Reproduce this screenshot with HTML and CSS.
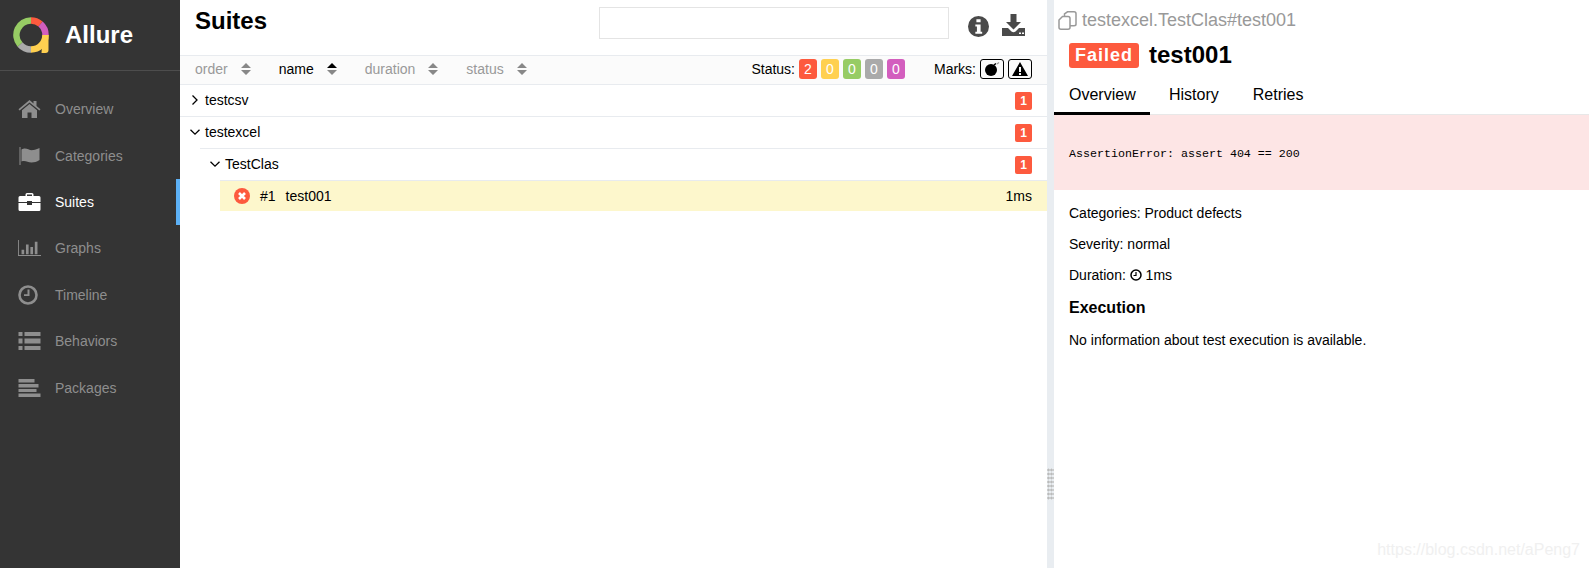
FILE: index.html
```html
<!DOCTYPE html>
<html lang="en">
<head>
<meta charset="utf-8">
<title>Allure</title>
<link rel="stylesheet" href="styles.css">
</head>
<body>
<div class="app">
  <aside class="side">
    <div class="brand">
      <svg class="logo" viewBox="0 0 36 36" width="36" height="36">
        <g fill="none" stroke-width="6.500">
          <path d="M18 3.500A14.500 14.500 0 0 1 27.500 7" stroke="#fd5a3e"/>
          <path d="M27.500 7A14.500 14.500 0 0 1 32.500 18" stroke="#d35ebe"/>
          <path d="M32.500 18A14.500 14.500 0 0 1 18 32.500" stroke="#ffd050"/>
          <path d="M18 32.500A14.500 14.500 0 0 1 7 27.500" stroke="#aaa"/>
          <path d="M7 27.500A14.500 14.500 0 0 1 18 3.500" stroke="#97cc64"/>
        </g>
        <path d="M29.500 18h6v15q0 3 -3 3h-4z" fill="#ffd050"/>
      </svg>
      <span class="brand-name">Allure</span>
    </div>
    <nav class="nav">
      <a class="nav-item"><svg class="nav-icon" viewBox="0 0 22 18"><path d="M11 0 0 9.300l1.100 1.300L11 2.400l9.900 8.200 1.100-1.300L18 6V1h-3v2.500z"/><path d="M11 4 3.500 10.200V18H9v-5.500h4V18h5.500v-7.800z"/></svg><span>Overview</span></a>
      <a class="nav-item"><svg class="nav-icon" viewBox="0 0 22 18"><path d="M1 0h1v18H1z"/><path d="M3 2.500c5-3 7 1.500 12 .5 2-.4 3.500-1 6-2v12c-3 1.800-5 2.500-8 2.500-4 0-6-2.500-10-1z"/></svg><span>Categories</span></a>
      <a class="nav-item active"><svg class="nav-icon" viewBox="0 0 22 18"><path d="M7 3V1.500Q7 0 8.500 0h5Q15 0 15 1.500V3h5.500Q22 3 22 4.500V9h-8.500V8h-5v1H0V4.500Q0 3 1.500 3zm1.500 0h5V1.500h-5z"/><path d="M0 10h8.500v2h5v-2H22v6.500q0 1.500-1.500 1.500h-19Q0 18 0 16.500z"/></svg><span>Suites</span></a>
      <a class="nav-item"><svg class="nav-icon" viewBox="0 0 26 18"><path d="M0 0h1v17h25v1H0z"/><path d="M4 11h3v5H4zM9 5h3v11H9zM14 8h3v8h-3zM19 2h3v14h-3z"/></svg><span>Graphs</span></a>
      <a class="nav-item"><svg class="nav-icon clock" viewBox="0 0 20 20"><circle cx="10" cy="10" r="8.500" fill="none" stroke="currentColor" stroke-width="2.600"/><path d="M9.500 4.500h2V11H6V9.200h3.500z"/></svg><span>Timeline</span></a>
      <a class="nav-item"><svg class="nav-icon" viewBox="0 0 22 18"><path d="M0 0h4v4H0zM6 0h16v4H6zM0 6.500h4v5H0zM6 6.500h16v5H6zM0 14h4v4H0zM6 14h16v4H6z"/></svg><span>Behaviors</span></a>
      <a class="nav-item"><svg class="nav-icon" viewBox="0 0 22 18"><path d="M0 0h16v3.500H0zM0 5h20v3.500H0zM0 10h18v3H0zM0 14.500h22V18H0z"/></svg><span>Packages</span></a>
    </nav>
  </aside>

  <main class="middle">
    <header class="top">
      <h1 class="page-title">Suites</h1>
      <div class="search"></div>
      <svg class="top-info" viewBox="0 0 20 20" width="21" height="21"><path fill-rule="evenodd" d="M10 0a10 10 0 1 0 0 20 10 10 0 0 0 0-20zM8 3h4v3H8zM7 8h5v7h1.500v2h-6.500v-2H8.500v-5H7z"/></svg>
      <svg class="top-dl" viewBox="0 0 23 22" width="23" height="22"><path d="M8.500 0h6v8h4.500l-7.500 7.500L4 8h4.500z"/><path fill-rule="evenodd" d="M0 14h6l3.500 3.500q2 1.500 4 0L17 14h6v8H0zM17 18.500v1.500h2v-1.500zM20 18.500v1.500h2v-1.500z"/></svg>
    </header>

    <div class="bar">
      <div class="sort">order<svg class="updown" viewBox="0 0 10 12"><path d="M5 0l5 5H0zM5 12l5-5H0z"/></svg></div>
      <div class="sort on">name<svg class="updown" viewBox="0 0 10 12"><path d="M5 0l5 5H0z"/><path class="dim" d="M5 12l5-5H0z"/></svg></div>
      <div class="sort">duration<svg class="updown" viewBox="0 0 10 12"><path d="M5 0l5 5H0zM5 12l5-5H0z"/></svg></div>
      <div class="sort">status<svg class="updown" viewBox="0 0 10 12"><path d="M5 0l5 5H0zM5 12l5-5H0z"/></svg></div>
      <div class="filters">
        <span class="label">Status:</span>
        <span class="chip red">2</span><span class="chip yellow">0</span><span class="chip green">0</span><span class="chip gray">0</span><span class="chip pink">0</span>
        <span class="label marks">Marks:</span>
        <span class="mark"><svg viewBox="0 0 16 14" width="16" height="14"><circle cx="7" cy="8" r="6"/><path d="M10 3l2-1.500" stroke="#000" stroke-width="1.500"/><path d="M13 2l2-1.500" stroke="#999" stroke-width="1.200"/></svg></span>
        <span class="mark"><svg viewBox="0 0 16 14" width="16" height="14"><path fill-rule="evenodd" d="M8 0l8 14H0zM7 5v5h2V5zM7 11v2h2v-2z"/></svg></span>
      </div>
    </div>

    <div class="tree">
      <div class="row"><svg class="chev" viewBox="0 0 10 10"><path d="M2.500 .5 7 5 2.500 9.500"/></svg><span>testcsv</span><span class="count">1</span></div>
      <div class="row"><svg class="chev" viewBox="0 0 10 10"><path d="M.5 2.800 5 7.200 9.500 2.800"/></svg><span>testexcel</span><span class="count">1</span></div>
      <div class="sub">
        <div class="row"><svg class="chev" viewBox="0 0 10 10"><path d="M.5 2.800 5 7.200 9.500 2.800"/></svg><span>TestClas</span><span class="count">1</span></div>
        <div class="sub">
          <div class="row leaf"><svg class="fail" viewBox="0 0 16 16" width="16" height="16"><circle cx="8" cy="8" r="8" fill="#fd5a3e"/><path d="M5 5l6 6M11 5l-6 6" stroke="#fff" stroke-width="2.600"/></svg><span class="num">#1</span><span>test001</span><span class="time">1ms</span></div>
        </div>
      </div>
    </div>
  </main>

  <div class="gutter"><div class="grip"></div></div>

  <section class="detail">
    <div class="crumb"><svg viewBox="0 0 19 19" width="19" height="19"><path d="M6.500 5.500V3l3-2.200h6.500q2 0 2 2v10.500q0 1.500-2 1.500h-4M1 9l3.500-3.500h5.500q2 0 2 2v9q0 1.700-2 1.700H3q-2 0-2-1.700z" fill="none" stroke="#999" stroke-width="1.500"/></svg><span>testexcel.TestClas#test001</span></div>
    <div class="headline"><span class="failed">Failed</span><h2 class="test-name">test001</h2></div>
    <div class="tabs"><span class="tab current">Overview</span><span class="tab">History</span><span class="tab">Retries</span></div>
    <div class="error"><code>AssertionError: assert 404 == 200</code></div>
    <div class="info">
      <p>Categories: Product defects</p>
      <p>Severity: normal</p>
      <p class="dur">Duration: <svg viewBox="0 0 12 12" width="12" height="12"><circle cx="6" cy="6" r="5" fill="none" stroke="#000" stroke-width="1.500"/><path d="M6 3v3.500H3.500" fill="none" stroke="#000" stroke-width="1.200"/></svg> 1ms</p>
      <h3 class="section">Execution</h3>
      <p>No information about test execution is available.</p>
    </div>
    <div class="watermark">https://blog.csdn.net/aPeng7</div>
  </section>
</div>
</body>
</html>
```
FILE: styles.css
```css
* { box-sizing: border-box; }
html, body { margin: 0; height: 100%; }
body { font-family: "Liberation Sans", Arial, sans-serif; font-size: 14px; color: #000; background: #fff; overflow: hidden; }
.app { display: flex; height: 568px; }

.side { width: 180px; flex: none; background: #343434; color: #fff; }
.brand { height: 71px; display: flex; align-items: center; padding: 0 0 0 13px; border-bottom: 1px solid #4d4d4d; }
.logo { flex: none; }
.brand-name { font-size: 24px; font-weight: 700; margin-left: 16px; }
.nav { padding-top: 15px; }
.nav-item { height: 46.400px; display: flex; align-items: center; padding-left: 18px; color: #8e8e8e; border-right: 4px solid transparent; }
.nav-item.active { color: #fff; border-right-color: #5cb0f5; }
.nav-icon { width: 23px; height: 18px; fill: currentColor; flex: none; margin-right: 14px; }
.nav-icon.clock { width: 20px; height: 20px; margin-right: 17px; }

.middle { width: 867px; flex: none; }
.top { height: 55px; display: flex; align-items: flex-start; padding-left: 15px; }
.page-title { margin: 6px 0 0; font-size: 24px; line-height: 30px; font-weight: 700; width: 404px; }
.search { width: 350px; height: 32px; margin-top: 7px; border: 1px solid #e4e4e4; background: #fff; }
.top-info { margin: 16px 0 0 19px; fill: #4a4a4a; }
.top-dl { margin: 14px 0 0 13px; fill: #4a4a4a; }

.bar { height: 30px; display: flex; align-items: center; background: #fbfbfb; border-top: 1px solid #e8ebef; border-bottom: 1px solid #e8ebef; padding: 0 15px 2px; color: #999; }
.sort { display: flex; align-items: center; margin-right: 28px; }
.sort.on { color: #000; }
.updown { width: 10px; height: 12px; margin-left: 13px; fill: #888; }
.sort.on .updown { fill: #000; }
.sort.on .dim { fill: #888; }
.filters { margin-left: auto; display: flex; align-items: center; color: #000; }
.label { margin-right: 4px; }
.chip { width: 18px; height: 20px; border-radius: 3px; color: #fff; text-align: center; line-height: 20px; font-size: 14px; margin-right: 4px; }
.red { background: #fd5a3e; } .yellow { background: #ffd050; } .green { background: #97cc64; } .gray { background: #aaa; } .pink { background: #d35ebe; }
.marks { margin-left: 25px; }
.mark { width: 24px; height: 20px; border: 1px solid #000; border-radius: 3px; display: flex; align-items: center; justify-content: center; margin-right: 4px; }
.mark:last-child { margin-right: 0; }

.row { height: 32px; display: flex; align-items: center; border-top: 1px solid #e8ebef; padding: 0 15px 2px 10px; }
.tree > .row:first-child { height: 31px; border-top: 0; }
.sub { padding-left: 20px; }
.chev { width: 10px; height: 10px; margin-right: 5px; fill: none; stroke: #000; stroke-width: 1.300; flex: none; }
.count { margin: 0 0 -2px auto; width: 17px; height: 18px; border-radius: 2px; background: #fd5a3e; color: #fff; font-size: 12px; font-weight: 700; text-align: center; line-height: 18px; }
.leaf { height: 31px; background: #fdf7cc; padding: 0 15px 0 14px; }
.fail { margin-right: 10px; flex: none; }
.num { margin-right: 10px; }
.time { margin-left: auto; }

.gutter { width: 7px; flex: none; background: #e9edf1; display: flex; align-items: flex-end; padding-bottom: 68px; }
.grip { width: 7px; height: 32px; background-image: radial-gradient(#bbb 1px, transparent 1.200px); background-size: 3px 4px; }

.detail { flex: 1; position: relative; min-width: 0; }
.crumb { height: 40px; display: flex; align-items: center; padding-left: 4px; color: #999; font-size: 18px; }
.crumb svg { margin-right: 5px; flex: none; }
.headline { display: flex; align-items: center; height: 30px; padding-left: 15px; }
.failed { background: #fd5a3e; color: #fff; font-size: 18px; font-weight: 700; letter-spacing: 1px; height: 25px; line-height: 25px; width: 70px; text-align: center; border-radius: 3px; }
.test-name { margin: 0 0 0 10px; font-size: 24px; line-height: 30px; font-weight: 700; }
.tabs { display: flex; height: 45px; padding-top: 10px; border-bottom: 1px solid #e8e8e8; font-size: 16px; }
.tab { padding: 6px 15px 0; height: 35px; margin-right: 4px; }
.tab.current { border-bottom: 3px solid #000; width: 96px; }
.error { height: 75px; background: #fde5e5; display: flex; align-items: center; padding: 2px 0 0 15px; }
.error code { font-family: "Liberation Mono", monospace; font-size: 11.670px; }
.info { padding: 15px 15px 0; }
.info p { margin: 0 0 14px; line-height: 17px; }
.info .dur { margin-bottom: 0; }
.info .dur svg { vertical-align: -1px; }
.section { margin: 15px 0; font-size: 16px; line-height: 18px; font-weight: 700; }
.watermark { position: absolute; right: 9px; bottom: 9px; font-size: 16px; color: #f0f0f0; }
```
